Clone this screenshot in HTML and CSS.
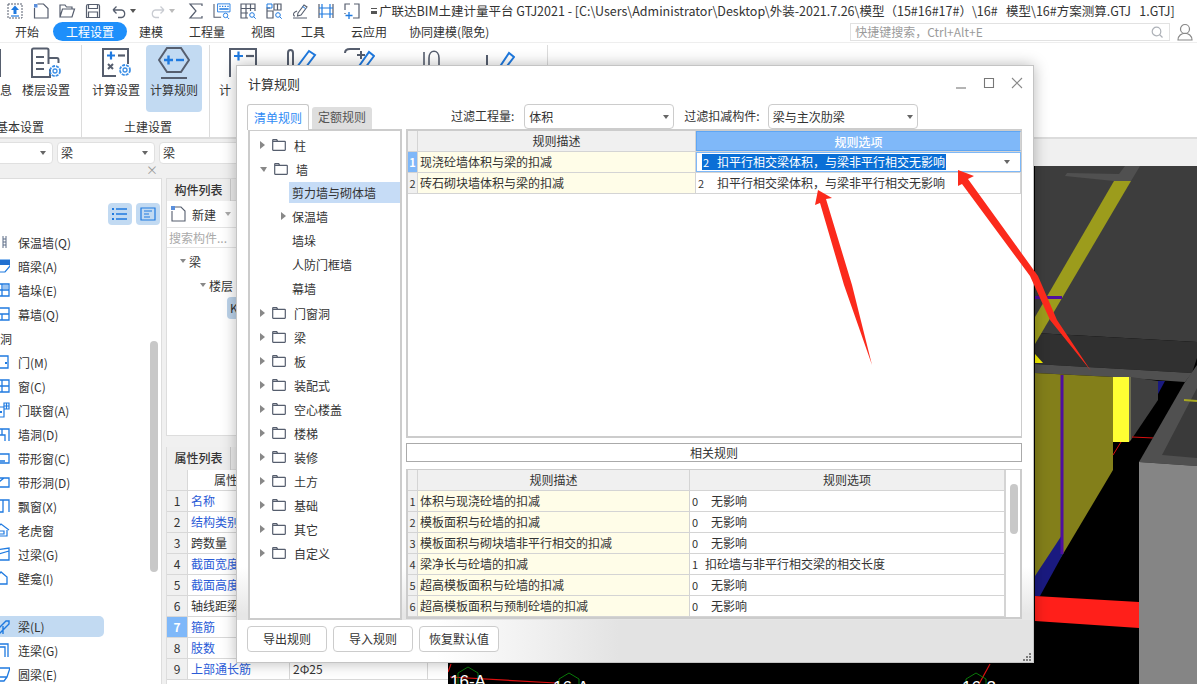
FILE: index.html
```html
<!DOCTYPE html>
<html lang="zh-CN">
<head>
    <meta charset="UTF-8">
    <title>广联达BIM土建计量平台 GTJ2021</title>
    <link rel="stylesheet" href="styles.css">
</head>
<body>

<svg class="defs" width="0" height="0">
    <symbol id="folder" viewBox="0 0 14 12"><path d="M.7 11.3V1.2c0-.3.2-.5.5-.5h3.5l1 1.6h7.1c.3 0 .5.2.5.5v8c0 .3-.2.5-.5.5H1.2c-.3 0-.5-.2-.5-.5zM.7 2.3h5" fill="none" stroke="#565e6e" stroke-width="1.2"/></symbol>
    <symbol id="n-wall" viewBox="0 0 16 16"><path d="M5 2v12M9 2v12M12 2v12M9 5h3M9 8h3M9 11h3" fill="none" stroke="#5b6b85" stroke-width="1"/></symbol>
    <symbol id="n-anl" viewBox="0 0 16 16"><path d="M0 7l5-5h11v6L11 14H0z" fill="none" stroke="#1f7ae0" stroke-width="1.2"/><path d="M0 7l5-5h11v5z" fill="#1f6fd0"/></symbol>
    <symbol id="n-duo" viewBox="0 0 16 16"><path d="M1 2h14v12H1zM1 8h14M8 2v12" fill="none" stroke="#1f7ae0" stroke-width="1.3"/><path d="M9 3h5v4H9z" fill="#9cc4f0"/></symbol>
    <symbol id="n-mu" viewBox="0 0 16 16"><path d="M1 2h14v12H1zM1 8h14M8 8v6" fill="none" stroke="#1f7ae0" stroke-width="1.3"/></symbol>
    <symbol id="n-door" viewBox="0 0 16 16"><path d="M2 14V2h12v12z" fill="none" stroke="#1f7ae0" stroke-width="1.3"/><path d="M11 8h2v2h-2z" fill="#1f7ae0"/></symbol>
    <symbol id="n-win" viewBox="0 0 16 16"><path d="M1 2h14v12H1zM8 2v12M1 8h14" fill="none" stroke="#1f7ae0" stroke-width="1.3"/></symbol>
    <symbol id="n-mlc" viewBox="0 0 16 16"><path d="M1 5h9v10H1zM10 1h5v6h-5zM12.500 1v6M10 4h5" fill="none" stroke="#1f7ae0" stroke-width="1.2"/><path d="M6 9h2v2H6z" fill="#1f7ae0"/></symbol>
    <symbol id="n-hole" viewBox="0 0 16 16"><path d="M1 15V3h14v12M5 15V9h6v6M8 3v6" fill="none" stroke="#1f7ae0" stroke-width="1.3"/></symbol>
    <symbol id="n-band" viewBox="0 0 16 16"><path d="M1 4h14v9H1zM1 11h10" fill="none" stroke="#1f7ae0" stroke-width="1.3"/></symbol>
    <symbol id="n-band2" viewBox="0 0 16 16"><path d="M1 4h14v9H1zM1 11l9-7" fill="none" stroke="#1f7ae0" stroke-width="1.3"/></symbol>
    <symbol id="n-piao" viewBox="0 0 16 16"><path d="M1 2h14v12M1 2v12h8V2" fill="none" stroke="#1f7ae0" stroke-width="1.3"/></symbol>
    <symbol id="n-house" viewBox="0 0 16 16"><path d="M0 8l7-6 8 6M2 8v6h11V8M5 9h5v3H5z" fill="none" stroke="#1f7ae0" stroke-width="1.2"/></symbol>
    <symbol id="n-guo" viewBox="0 0 16 16"><path d="M1 4l14-2v12H1zM1 9l14-4" fill="none" stroke="#1f7ae0" stroke-width="1.3"/></symbol>
    <symbol id="n-bi" viewBox="0 0 16 16"><path d="M2 14V7l5-5 6 5v7z" fill="none" stroke="#1f7ae0" stroke-width="1.3"/></symbol>
    <symbol id="n-liang" viewBox="0 0 16 16"><path d="M0 14L12 2h3v3L5 15M9 7v8" fill="none" stroke="#1f7ae0" stroke-width="1.4"/></symbol>
    <symbol id="n-lian" viewBox="0 0 16 16"><path d="M0 2h14v13M0 5h11v10" fill="none" stroke="#1f7ae0" stroke-width="1.3"/></symbol>
    <symbol id="n-yuan" viewBox="0 0 16 16"><path d="M5 2h11l-3 9H2zM2 11l-1 4h9l3-4" fill="none" stroke="#1f7ae0" stroke-width="1.3"/></symbol>
</svg>

<div class="app">

    <div class="titlebar">
        <span class="qa">
            <svg viewBox="0 0 16 16"><path d="M1 1h14v14H1z" fill="none" stroke="#565e6e" stroke-dasharray="2 1"/><path d="M8 2.500l4 4.500H9.500v4h-3V7H4z" fill="#1f7ae0"/><path d="M4 13h8" stroke="#1f7ae0" stroke-width="1.200"/></svg>
        </span>
        <span class="qa">
            <svg viewBox="0 0 16 16"><path d="M4.500 1h6L15 5.500V15H1.500V5" fill="none" stroke="#565e6e" stroke-width="1.200"/><path d="M1 1h3.500v3.500H1z" fill="#5a8fdc"/></svg>
        </span>
        <span class="qa">
            <svg viewBox="0 0 16 16"><path d="M1 14V2h5l1.500 2H13v2M1 14l2.500-8H15.500L13 14z" fill="none" stroke="#565e6e" stroke-width="1.200"/></svg>
        </span>
        <span class="qa">
            <svg viewBox="0 0 16 16"><path d="M1.500 3c0-1 .5-1.500 1.500-1.500h10c1 0 1.500.5 1.500 1.500v11.500h-13zM3.500 1.500v4h9v-4M3.500 14.500V9h9v5.500" fill="none" stroke="#565e6e" stroke-width="1.200"/></svg>
        </span>
        <span class="qa">
            <svg viewBox="0 0 16 16"><path d="M2 7h8.500a3.800 3.800 0 0 1 0 7.500H7M2 7l3.500-3.500M2 7l3.500 3.500" fill="none" stroke="#565e6e" stroke-width="1.300"/></svg>
        </span>
        <span class="qa-caret"></span>
        <span class="qa qa-redo">
            <svg viewBox="0 0 16 16"><path d="M14 7H5.500a3.800 3.800 0 0 0 0 7.500H9M14 7l-3.500-3.500M14 7l-3.500 3.500" fill="none" stroke="#c9ccd2" stroke-width="1.300"/></svg>
        </span>
        <span class="qa-caret qa-caret-off"></span>
        <span class="qa qa-sum">
            <svg viewBox="0 0 16 16"><path d="M14 3V1H2l6 7-6 7h12v-2" fill="none" stroke="#565e6e" stroke-width="1.200"/></svg>
        </span>
        <span class="qa">
            <svg viewBox="0 0 20 18"><path d="M1 1v15h8" fill="none" stroke="#565e6e" stroke-width="1.200"/><path d="M5 1h14v9H5z" fill="none" stroke="#1f7ae0"/><path d="M7 3h1.500v1.500H7zM10 3h1.500v1.500H10zM13 3h1.500v1.500H13zM16 3h1.500v1.500H16zM7 6h10.500v1.500H7z" fill="#1f7ae0"/><circle cx="14" cy="14" r="2.500" fill="none" stroke="#1f7ae0"/><path d="M16 16l2 2" stroke="#1f7ae0"/></svg>
        </span>
        <span class="qa">
            <svg viewBox="0 0 16 16"><path d="M8 15H1V1h14v7M1 5.500h14M1 10h7M6 1v14M10.500 1v7" fill="none" stroke="#565e6e" stroke-width="1.200"/><circle cx="12" cy="12" r="2.300" fill="none" stroke="#1f7ae0"/><path d="M13.700 13.700l2 2" stroke="#1f7ae0"/></svg>
        </span>
        <span class="qa">
            <svg viewBox="0 0 16 16"><path d="M8 1h7v6H8zM1 8h6v7H1zM1 8V5h3M11.500 1v6" fill="none" stroke="#565e6e" stroke-width="1.200"/><path d="M1 1h5v4H1z" fill="none" stroke="#1f7ae0"/><circle cx="12" cy="12" r="2.300" fill="none" stroke="#1f7ae0"/><path d="M13.700 13.700l2 2" stroke="#1f7ae0"/></svg>
        </span>
        <span class="qa">
            <svg viewBox="0 0 16 16"><path d="M1 15h14M3 13c-2 0-2-3 0-4l2-1M6 10l6-8 3 2-6 8-3.500 1z" fill="none" stroke="#565e6e" stroke-width="1.100"/><path d="M10.500 3.500l3 2" stroke="#1f7ae0"/></svg>
        </span>
        <span class="qa">
            <svg viewBox="0 0 16 16"><path d="M1 1v14M15 1v14" stroke="#565e6e" stroke-width="1.200"/><path d="M4 1v14M12 1v14M1 5h14M1 11h14" stroke="#1f7ae0" stroke-width="1.200"/></svg>
        </span>
        <span class="qa">
            <svg viewBox="0 0 16 16"><path d="M6 1h-5v6M10 1h5v14H9M1 10v1" fill="none" stroke="#565e6e" stroke-width="1.200"/><path d="M5 9v7M1.500 12.500h7" stroke="#1f7ae0" stroke-width="1.300"/></svg>
        </span>
        <span class="title-caret"></span>
        <span class="title-text">广联达BIM土建计量平台 GTJ2021 - [C:\Users\Administrator\Desktop\外装-2021.7.26\模型（15#16#17#）\16#&nbsp;&nbsp;&nbsp;模型\16#方案测算.GTJ&nbsp;&nbsp;&nbsp;1.GTJ]</span>
    </div>

    <div class="menubar">
        <span class="menu-item menu-kaishi">开始</span>
        <span class="menu-item menu-active">工程设置</span>
        <span class="menu-item menu-jianmo">建模</span>
        <span class="menu-item menu-lg">工程量</span>
        <span class="menu-item menu-lg">视图</span>
        <span class="menu-item menu-lg">工具</span>
        <span class="menu-item menu-lg">云应用</span>
        <span class="menu-item menu-xt">协同建模(限免)</span>
        <div class="quick-search">
            <span>快捷键搜索，Ctrl+Alt+E</span>
            <svg width="12" height="12" viewBox="0 0 12 12"><circle cx="5.500" cy="5.500" r="4.300" fill="none" stroke="#aeb2b8" stroke-width="1.200"/><path d="M8.500 8.500l3 3" stroke="#aeb2b8" stroke-width="1.200"/></svg>
        </div>
        <svg class="user-icon" width="16" height="18" viewBox="0 0 16 18"><circle cx="8" cy="6" r="4.500" fill="none" stroke="#888" stroke-width="1.200"/><path d="M1 17c0-9 14-9 14 0z" fill="none" stroke="#888" stroke-width="1.200"/></svg>
    </div>

    <div class="ribbon">
        <div class="ribbon-group ribbon-group-a">
            <div class="ribbon-tools">
                <div class="ribbon-item">
                    <svg viewBox="0 0 32 32"><path d="M4 3h24v26H4z" fill="none" stroke="#565e6e" stroke-width="2"/></svg>
                    <span>工程信息</span>
                </div>
                <div class="ribbon-item">
                    <svg viewBox="0 0 32 32"><path d="M20 22v8H2V3c0-1 .5-1.500 1.500-1.500H17c1 0 1.500.5 1.500 1.500v14M18.500 11H27c1 0 1.500 1 1.500 2v3" fill="none" stroke="#565e6e" stroke-width="2"/><path d="M6 10h8M6 16h8M6 22h8" stroke="#565e6e" stroke-width="2"/><circle cx="25" cy="24" r="5" fill="none" stroke="#3c8fe6" stroke-width="1.800" stroke-dasharray="3 1"/><circle cx="25" cy="24" r="2" fill="none" stroke="#3c8fe6" stroke-width="1.300"/></svg>
                    <span>楼层设置</span>
                </div>
            </div>
            <div class="ribbon-label">基本设置</div>
        </div>
        <div class="ribbon-group ribbon-group-b">
            <div class="ribbon-tools">
                <div class="ribbon-item">
                    <svg viewBox="0 0 32 32"><path d="M16 29H3V2h25v15" fill="none" stroke="#565e6e" stroke-width="2"/><path d="M7 8.500h8M11 4.500v8" stroke="#1f7ae0" stroke-width="2.200"/><path d="M18 8.500h7" stroke="#565e6e" stroke-width="2.200"/><path d="M8 17l5 5M13 17l-5 5" stroke="#565e6e" stroke-width="2"/><circle cx="25" cy="23" r="5" fill="none" stroke="#3c8fe6" stroke-width="1.800" stroke-dasharray="3 1"/><circle cx="25" cy="23" r="2" fill="none" stroke="#3c8fe6" stroke-width="1.300"/></svg>
                    <span>计算设置</span>
                </div>
                <div class="ribbon-item ribbon-item-active">
                    <svg viewBox="0 0 32 32"><path d="M9 1h14l8 12-8 12H9L1 13z" fill="none" stroke="#565e6e" stroke-width="2"/><path d="M6 13h9M10.500 8.500v9" stroke="#1f7ae0" stroke-width="2.400"/><path d="M18 13h8" stroke="#1f7ae0" stroke-width="2.400"/><path d="M3 31h26" stroke="#565e6e" stroke-width="2"/></svg>
                    <span>计算规则</span>
                </div>
            </div>
            <div class="ribbon-label">土建设置</div>
        </div>
        <div class="ribbon-group ribbon-group-c">
            <div class="ribbon-tools">
                <div class="ribbon-item">
                    <svg viewBox="0 0 32 32"><path d="M3 30V2h26v28" fill="none" stroke="#565e6e" stroke-width="2"/><path d="M7 9h9M11.500 4.500v9" stroke="#1f7ae0" stroke-width="2.200"/><path d="M19 9h8" stroke="#565e6e" stroke-width="2.200"/></svg>
                    <span class="ribbon-cut">计</span>
                </div>
                <div class="ribbon-item">
                    <svg viewBox="0 0 32 32"><path d="M3 30V6c0-4 5-4 5 0v24" fill="none" stroke="#565e6e" stroke-width="2"/><path d="M12 20L24 4l6 4-12 16-6 2z" fill="none" stroke="#1f7ae0" stroke-width="2"/></svg>
                </div>
                <div class="ribbon-item">
                    <svg viewBox="0 0 32 32"><path d="M2 6c0-4 3-4 5-4h10" fill="none" stroke="#565e6e" stroke-width="2"/><path d="M14 8h8M18 4v8" stroke="#565e6e" stroke-width="2"/><path d="M14 22L26 5l5 4-12 16-6 2z" fill="none" stroke="#1f7ae0" stroke-width="2"/></svg>
                </div>
                <div class="ribbon-item ribbon-item-gap">
                    <svg viewBox="0 0 32 32"><path d="M9 5v27M14 11c0-9 10-9 10 0v12c0 9-10 9-10 0z" fill="none" stroke="#565e6e" stroke-width="1.600"/></svg>
                </div>
                <div class="ribbon-item ribbon-item-gap2">
                    <svg viewBox="0 0 32 32"><path d="M4 8v20c0 2 1 3 3 3h3M10 18v9" fill="none" stroke="#565e6e" stroke-width="2"/><path d="M14 24L26 6l5 4-13 17-5 2z" fill="none" stroke="#1f7ae0" stroke-width="2"/></svg>
                </div>
            </div>
        </div>
    </div>

    <div class="selectbar">
        <div class="combo combo-first"><span></span><i class="caret"></i></div>
        <div class="combo"><span>梁</span><i class="caret"></i></div>
        <div class="combo combo-wide"><span>梁</span><i class="caret"></i></div>
    </div>

    <div class="workspace">

        <div class="nav-panel">
            <div class="nav-head"><span class="nav-close">×</span></div>
            <div class="nav-body">
                <div class="nav-tools">
                    <span class="nav-btn">
                        <svg width="16" height="14" viewBox="0 0 16 14"><path d="M4 2h11M4 7h11M4 12h11" stroke="#1f7ae0" stroke-width="1.300"/><path d="M0 1h2v2H0zM0 6h2v2H0zM0 11h2v2H0z" fill="#1f7ae0"/></svg>
                    </span>
                    <span class="nav-btn">
                        <svg width="16" height="14" viewBox="0 0 16 14"><path d="M1 1h14v12H1zM4 4h8M4 7h5M4 10h6" fill="none" stroke="#1f7ae0" stroke-width="1.200"/></svg>
                    </span>
                </div>
                <div class="nav-list">
                    <div class="nav-row"><svg><use href="#n-wall"/></svg>保温墙(Q)</div>
                    <div class="nav-row"><svg><use href="#n-anl"/></svg>暗梁(A)</div>
                    <div class="nav-row"><svg><use href="#n-duo"/></svg>墙垛(E)</div>
                    <div class="nav-row"><svg><use href="#n-mu"/></svg>幕墙(Q)</div>
                    <div class="nav-row nav-heading">洞</div>
                    <div class="nav-row"><svg><use href="#n-door"/></svg>门(M)</div>
                    <div class="nav-row"><svg><use href="#n-win"/></svg>窗(C)</div>
                    <div class="nav-row"><svg><use href="#n-mlc"/></svg>门联窗(A)</div>
                    <div class="nav-row"><svg><use href="#n-hole"/></svg>墙洞(D)</div>
                    <div class="nav-row"><svg><use href="#n-band"/></svg>带形窗(C)</div>
                    <div class="nav-row"><svg><use href="#n-band2"/></svg>带形洞(D)</div>
                    <div class="nav-row"><svg><use href="#n-piao"/></svg>飘窗(X)</div>
                    <div class="nav-row"><svg><use href="#n-house"/></svg>老虎窗</div>
                    <div class="nav-row"><svg><use href="#n-guo"/></svg>过梁(G)</div>
                    <div class="nav-row"><svg><use href="#n-bi"/></svg>壁龛(I)</div>
                    <div class="nav-row"></div>
                    <div class="nav-row nav-row-active"><svg><use href="#n-liang"/></svg>梁(L)</div>
                    <div class="nav-row"><svg><use href="#n-lian"/></svg>连梁(G)</div>
                    <div class="nav-row"><svg><use href="#n-yuan"/></svg>圆梁(E)</div>
                </div>
                <div class="nav-scroll"></div>
            </div>
        </div>

        <div class="mid-panel">
            <div class="comp-panel">
                <div class="panel-tabs"><span class="panel-tab">构件列表</span></div>
                <div class="comp-new">
                    <svg width="15" height="16" viewBox="0 0 15 16"><path d="M4 1h6l4 4v10H1V5" fill="none" stroke="#565e6e" stroke-width="1.100"/><path d="M0 0h4v4H0z" fill="#5a8fdc"/></svg>
                    <span>新建</span>
                    <i class="caret"></i>
                </div>
                <div class="comp-search">搜索构件...</div>
                <div class="comp-tree">
                    <div class="comp-node comp-node-1"><i class="caret"></i>梁</div>
                    <div class="comp-node comp-node-2"><i class="caret"></i>楼层</div>
                    <div class="comp-chip">K</div>
                </div>
            </div>
            <div class="prop-panel">
                <div class="panel-tabs"><span class="panel-tab">属性列表</span></div>
                <div class="prop-row prop-head"><span></span><span class="prop-name-head">属性名称</span><span></span></div>
                <div class="prop-row"><span>1</span><span class="prop-link">名称</span><span></span></div>
                <div class="prop-row"><span>2</span><span class="prop-link">结构类别</span><span></span></div>
                <div class="prop-row"><span>3</span><span>跨数量</span><span></span></div>
                <div class="prop-row"><span>4</span><span class="prop-link">截面宽度</span><span></span></div>
                <div class="prop-row"><span>5</span><span class="prop-link">截面高度</span><span></span></div>
                <div class="prop-row"><span>6</span><span>轴线距梁左</span><span></span></div>
                <div class="prop-row prop-row-active"><span>7</span><span class="prop-link">箍筋</span><span></span></div>
                <div class="prop-row"><span>8</span><span class="prop-link">肢数</span><span></span></div>
                <div class="prop-row"><span>9</span><span class="prop-link">上部通长筋</span><span>2Φ25</span></div>
            </div>
        </div>

        <svg class="viewport" viewBox="448 166 749 518">
            <rect x="448" y="166" width="749" height="518" fill="#000"/>
            <!-- floor slab -->
            <polygon points="1035,166 1197,166 1197,342 1035,333" fill="#3d3d3d"/>
            <polygon points="1035,333 1197,342 1197,358 1192,373 1035,364" fill="#303030"/>
            <polygon points="1035,364 1192,373 1185,382 1113,377 1035,373" fill="#505050"/>
            <polygon points="1125,166 1140,166 1131,181 1114,181 1065,176 1067,173 1119,174" fill="#505050"/>
            <polygon points="1114,181 1131,181 1035,344 1035,317" fill="#9c9c1c"/>
            <polygon points="1035,296 1062,296 1062,299 1035,299" fill="#4f0f9e"/>
            <polygon points="1035,354 1043,363 1035,363" fill="#f5f000"/>
            <!-- wall below slab -->
            <polygon points="1035,373 1113,377 1113,470 1063,554 1035,596" fill="#837f1a"/>
            <polygon points="1062,535 1063,554 1040,596 1035,596 1035,576" fill="#1a1a80"/>
            <path d="M1062 375V554" stroke="#4f0f9e" stroke-width="3"/>
            <rect x="1113" y="377" width="16" height="65" fill="#ffff33"/>
            <polygon points="1129,377 1131,377 1131,440 1129,442" fill="#6e6e50"/>
            <polygon points="1131,377 1158,381 1158,400 1131,440" fill="#404040"/>
            <polygon points="1158,381 1165,381 1158,394" fill="#1a1a80"/>
            <path d="M1132 437L1154 438M1121 442L1113 455" stroke="#d80f0f" fill="none"/>
            <polygon points="1035,596 1139,602 1139,628 1035,621" fill="#ff1f1a"/>
            <!-- grey block -->
            <polygon points="1139,462 1185,382 1197,365 1197,466" fill="#505050"/>
            <polygon points="1162,455 1197,388 1197,458" fill="#3a3a3a"/>
            <polygon points="1139,462 1197,466 1197,684 1139,684" fill="#858585"/>
            <path d="M1184 400L1197 401" stroke="#a8a820" stroke-width="2"/>
            <!-- axis labels -->
            <path d="M450 677L556 683M990 664L979 684M451 664L448 672" stroke="#e01010" stroke-width="1.200" fill="none"/>
            <polygon points="468,667 478,673 478,690 458,690 458,673" fill="none" stroke="#0a7a0a"/>
            <polygon points="569,673 579,679 579,696 559,696 559,679" fill="none" stroke="#0a7a0a"/>
            <polygon points="976,673 986,679 986,696 966,696 966,679" fill="none" stroke="#0a7a0a"/>
            <text class="axis-text" x="450" y="687">16-A</text>
            <text class="axis-text" x="553" y="693">16-A</text>
            <text class="axis-text" x="962" y="693">16-2</text>
        </svg>
    </div>

    <div class="dialog">
        <div class="dialog-head">
            <span class="dialog-title">计算规则</span>
            <div class="win-btns">
                <svg width="12" height="12" viewBox="0 0 12 12"><path d="M1 11h10" stroke="#777" stroke-width="1.100"/></svg>
                <svg width="12" height="12" viewBox="0 0 12 12"><path d="M1.500 1.500h9v9h-9z" fill="none" stroke="#777" stroke-width="1.100"/></svg>
                <svg width="12" height="12" viewBox="0 0 12 12"><path d="M1 1l10 10M11 1L1 11" stroke="#888" stroke-width="1.100"/></svg>
            </div>
        </div>

        <div class="dialog-bar">
            <span class="rule-tab rule-tab-active">清单规则</span>
            <span class="rule-tab">定额规则</span>
            <span class="filter-label filter-label-a">过滤工程量:</span>
            <div class="filter-select"><span>体积</span><i class="caret"></i></div>
            <span class="filter-label filter-label-b">过滤扣减构件:</span>
            <div class="filter-select"><span>梁与主次肋梁</span><i class="caret"></i></div>
        </div>

        <div class="dialog-main">
            <div class="rule-tree">
                <div class="tree-row"><i class="tri"></i><svg class="tree-folder"><use href="#folder"/></svg><span>柱</span></div>
                <div class="tree-row"><i class="tri tri-open"></i><svg class="tree-folder"><use href="#folder"/></svg><span>墙</span></div>
                <div class="tree-child tree-child-active">剪力墙与砌体墙</div>
                <div class="tree-child"><i class="tri"></i>保温墙</div>
                <div class="tree-child">墙垛</div>
                <div class="tree-child">人防门框墙</div>
                <div class="tree-child">幕墙</div>
                <div class="tree-row"><i class="tri"></i><svg class="tree-folder"><use href="#folder"/></svg><span>门窗洞</span></div>
                <div class="tree-row"><i class="tri"></i><svg class="tree-folder"><use href="#folder"/></svg><span>梁</span></div>
                <div class="tree-row"><i class="tri"></i><svg class="tree-folder"><use href="#folder"/></svg><span>板</span></div>
                <div class="tree-row"><i class="tri"></i><svg class="tree-folder"><use href="#folder"/></svg><span>装配式</span></div>
                <div class="tree-row"><i class="tri"></i><svg class="tree-folder"><use href="#folder"/></svg><span>空心楼盖</span></div>
                <div class="tree-row"><i class="tri"></i><svg class="tree-folder"><use href="#folder"/></svg><span>楼梯</span></div>
                <div class="tree-row"><i class="tri"></i><svg class="tree-folder"><use href="#folder"/></svg><span>装修</span></div>
                <div class="tree-row"><i class="tri"></i><svg class="tree-folder"><use href="#folder"/></svg><span>土方</span></div>
                <div class="tree-row"><i class="tri"></i><svg class="tree-folder"><use href="#folder"/></svg><span>基础</span></div>
                <div class="tree-row"><i class="tri"></i><svg class="tree-folder"><use href="#folder"/></svg><span>其它</span></div>
                <div class="tree-row"><i class="tri"></i><svg class="tree-folder"><use href="#folder"/></svg><span>自定义</span></div>
            </div>

            <div class="rule-right">
                <div class="rule-grid">
                    <div class="grid-row grid-head">
                        <span class="cell-num"></span>
                        <span class="cell-title">规则描述</span>
                        <span class="cell-title cell-title-active">规则选项</span>
                    </div>
                    <div class="grid-row">
                        <span class="cell-num cell-num-active">1</span>
                        <span class="cell-desc">现浇砼墙体积与梁的扣减</span>
                        <span class="cell-opt cell-opt-edit"><span class="opt-selected"><b class="opt-no opt-no-sel">2</b>扣平行相交梁体积，与梁非平行相交无影响</span><i class="caret"></i></span>
                    </div>
                    <div class="grid-row">
                        <span class="cell-num">2</span>
                        <span class="cell-desc">砖石砌块墙体积与梁的扣减</span>
                        <span class="cell-opt"><b class="opt-no">2</b>扣平行相交梁体积，与梁非平行相交无影响</span>
                    </div>
                </div>

                <div class="related-title">相关规则</div>

                <div class="rule-grid rule-grid-low">
                    <div class="grid-rows">
                        <div class="grid-row grid-head">
                            <span class="cell-num"></span>
                            <span class="cell-title">规则描述</span>
                            <span class="cell-title">规则选项</span>
                        </div>
                        <div class="grid-row"><span class="cell-num">1</span><span class="cell-desc">体积与现浇砼墙的扣减</span><span class="cell-opt"><b class="opt-no">0</b>无影响</span></div>
                        <div class="grid-row"><span class="cell-num">2</span><span class="cell-desc">模板面积与砼墙的扣减</span><span class="cell-opt"><b class="opt-no">0</b>无影响</span></div>
                        <div class="grid-row"><span class="cell-num">3</span><span class="cell-desc">模板面积与砌块墙非平行相交的扣减</span><span class="cell-opt"><b class="opt-no">0</b>无影响</span></div>
                        <div class="grid-row"><span class="cell-num">4</span><span class="cell-desc">梁净长与砼墙的扣减</span><span class="cell-opt"><b class="opt-no opt-no-tight">1</b>扣砼墙与非平行相交梁的相交长度</span></div>
                        <div class="grid-row"><span class="cell-num">5</span><span class="cell-desc">超高模板面积与砼墙的扣减</span><span class="cell-opt"><b class="opt-no">0</b>无影响</span></div>
                        <div class="grid-row"><span class="cell-num">6</span><span class="cell-desc">超高模板面积与预制砼墙的扣减</span><span class="cell-opt"><b class="opt-no">0</b>无影响</span></div>
                        <div class="grid-row"><span class="cell-num"></span><span class="cell-desc"></span><span class="cell-opt"></span></div>
                    </div>
                    <div class="grid-scroll"><span class="grid-thumb"></span></div>
                </div>
            </div>
        </div>

        <div class="dialog-foot">
            <span class="foot-btn">导出规则</span>
            <span class="foot-btn">导入规则</span>
            <span class="foot-btn">恢复默认值</span>
        </div>
        <svg class="grip" width="8" height="8" viewBox="0 0 8 8"><path d="M6 0h2v2H6zM3 3h2v2H3zM6 3h2v2H6zM0 6h2v2H0zM3 6h2v2H3zM6 6h2v2H6z" fill="#7c7c7c"/></svg>
    </div>

    <!-- red arrows drawn on the screenshot -->
    <svg class="arrows" viewBox="0 0 1197 684">
        <polygon points="818,190 832,198 826,199 852,285 872,365 844,285 820,203 815,205" fill="#fb2a1c"/>
        <polygon points="958,170 974,176 968,179 1038,276 1057,320 1091,371 1050,320 1030,276 962,184 958,186" fill="#fb2a1c"/>
    </svg>
</div>

</body>
</html>
```

FILE: styles.css
```css
* {
    box-sizing: border-box;
}

body {
    margin: 0;
    font-family: "Noto Sans CJK SC", "Noto Sans", sans-serif;
    font-size: 12px;
    color: #333;
    background: #f0f0f0;
}

.defs {
    position: absolute;
}

.app {
    position: relative;
    width: 1197px;
    height: 684px;
    overflow: hidden;
    display: flex;
    flex-direction: column;
}

.caret {
    display: inline-block;
    width: 0;
    height: 0;
    border-left: 3px solid transparent;
    border-right: 3px solid transparent;
    border-top: 4px solid #666;
}

/* title bar */
.titlebar {
    height: 21px;
    flex: none;
    display: flex;
    align-items: center;
    padding-left: 2px;
    background: #fff;
    white-space: nowrap;
}

.qa {
    width: 26px;
    height: 16px;
    flex: none;
    display: flex;
    justify-content: center;
}

.qa svg {
    height: 16px;
    width: 20px;
}

.qa-redo {
    margin-left: 6px;
}

.qa-sum {
    margin-left: 5px;
}

.qa-caret {
    width: 0;
    height: 0;
    margin: 0 3px 0 -2px;
    border-left: 3px solid transparent;
    border-right: 3px solid transparent;
    border-top: 4px solid #555;
}

.qa-caret-off {
    border-top-color: #bbb;
}

.title-caret {
    width: 6px;
    height: 6px;
    margin-left: 6px;
    border-top: 1px solid #555;
    border-bottom: 3px solid #555;
}

.title-text {
    margin-left: 2px;
    font-size: 12.500px;
    color: #333;
}

/* menu bar */
.menubar {
    height: 21px;
    flex: none;
    display: flex;
    align-items: center;
    background: #fff;
}

.menu-item {
    flex: none;
}

.menu-kaishi {
    margin-left: 15px;
}

.menu-active {
    width: 74px;
    height: 19px;
    line-height: 19px;
    margin-left: 14px;
    text-align: center;
    color: #fff;
    background: #1e8ffb;
    border-radius: 10px;
}

.menu-jianmo {
    margin-left: 12px;
}

.menu-lg {
    margin-left: 26px;
}

.menu-xt {
    margin-left: 22px;
}

.quick-search {
    width: 320px;
    height: 18px;
    margin-left: 361px;
    padding: 0 6px 0 4px;
    display: flex;
    align-items: center;
    justify-content: space-between;
    color: #9b9b9b;
    background: #fff;
    border: 1px solid #e2e2e2;
}

.user-icon {
    margin-left: 7px;
    flex: none;
}

/* ribbon */
.ribbon {
    height: 97px;
    flex: none;
    display: flex;
    margin-left: -41px;
    padding-top: 2px;
    background: #fff;
    border-top: 1px solid #eee;
    border-bottom: 2px solid #dcdcdc;
}

.ribbon-group {
    height: 92px;
    display: flex;
    flex-direction: column;
    border-right: 1px solid #dcdcdc;
}

.ribbon-group-a {
    width: 123px;
}

.ribbon-group-b {
    width: 128px;
    padding-left: 5px;
}

.ribbon-group-c {
    width: 338px;
    padding-left: 4px;
}

.ribbon-tools {
    display: flex;
    height: 74px;
}

.ribbon-item {
    width: 58px;
    height: 67px;
    flex: none;
    display: flex;
    flex-direction: column;
    align-items: center;
    padding-top: 2px;
    border-radius: 4px;
}

.ribbon-item svg {
    width: 32px;
    height: 32px;
    flex: none;
}

.ribbon-item span {
    margin-top: 2px;
    white-space: nowrap;
}

.ribbon-item .ribbon-cut {
    width: 48px;
}

.ribbon-item-active {
    width: 56px;
    margin-left: 1px;
    background: #c2daf2;
}

.ribbon-item-gap {
    margin-left: 14px;
}

.ribbon-item-gap2 {
    margin-left: 10px;
}

.ribbon-label {
    text-align: center;
    line-height: 16px;
}

/* selects under the ribbon */
.selectbar {
    height: 27px;
    flex: none;
    display: flex;
    align-items: center;
    gap: 4px;
    padding-top: 0;
    background: #f0f0f0;
}

.combo {
    width: 98px;
    height: 22px;
    flex: none;
    display: flex;
    align-items: center;
    justify-content: space-between;
    padding: 0 6px 0 3px;
    background: #fff;
    border: 1px solid #e0e0e0;
    border-radius: 4px;
}

.combo-first {
    width: 60px;
    margin-left: -7px;
}

.combo-wide {
    width: 120px;
}

/* main area */
.workspace {
    flex: 1;
    min-height: 0;
    display: flex;
}

.nav-panel {
    width: 162px;
    flex: none;
    display: flex;
    flex-direction: column;
}

.nav-head {
    height: 12px;
    flex: none;
    position: relative;
    background: #f0f0f0;
}

.nav-close {
    position: absolute;
    right: 4px;
    top: -3px;
    color: #999;
    font-size: 12px;
    line-height: 14px;
}

.nav-body {
    flex: 1;
    position: relative;
    background: #fff;
    border-top: 1px solid #ddd;
    border-right: 1px solid #ddd;
    overflow: hidden;
}

.nav-tools {
    height: 51px;
    display: flex;
    justify-content: flex-end;
    gap: 4px;
    padding: 24px 1px 0 0;
}

.nav-btn {
    width: 24px;
    height: 22px;
    display: flex;
    align-items: center;
    justify-content: center;
    background: #c2daf2;
    border-radius: 4px;
}

.nav-row {
    width: 104px;
    height: 24px;
    display: flex;
    align-items: center;
    padding-left: 0;
    white-space: nowrap;
    border-radius: 0 5px 5px 0;
}

.nav-row svg {
    width: 16px;
    height: 16px;
    flex: none;
    margin: 0 8px 0 -6px;
}

.nav-row-active {
    height: 21px;
    margin: 2px 0 1px;
    background: #c2daf2;
}

.nav-heading {
    padding-left: 0;
}

.nav-scroll {
    position: absolute;
    left: 150px;
    top: 162px;
    width: 8px;
    height: 231px;
    background: #c8c8c8;
    border-radius: 4px;
}

.mid-panel {
    width: 286px;
    flex: none;
    margin-left: 0;
    padding-left: 4px;
    display: flex;
    flex-direction: column;
}

.comp-panel {
    height: 258px;
    margin-top: 12px;
    flex: none;
    background: #fff;
    border: 1px solid #ddd;
    overflow: hidden;
}

.panel-tabs {
    height: 22px;
    background: #ececec;
    border-bottom: 1px solid #ddd;
}

.panel-tab {
    display: inline-block;
    width: 64px;
    height: 22px;
    line-height: 21px;
    text-align: center;
    font-weight: 500;
    background: #efefef;
    border-right: 1px solid #ccc;
}

.comp-new {
    height: 27px;
    display: flex;
    align-items: center;
    padding-left: 4px;
    border-bottom: 1px solid #e4e4e4;
}

.comp-new span {
    margin: 0 9px 0 6px;
}

.comp-new .caret {
    border-top-color: #aaa;
}

.comp-search {
    height: 20px;
    line-height: 20px;
    padding-left: 2px;
    color: #aaa;
    border-bottom: 1px solid #e4e4e4;
}

.comp-tree {
    padding-top: 1px;
}

.comp-node {
    height: 24px;
    display: flex;
    align-items: center;
    gap: 3px;
}

.comp-node .caret {
    border-top-color: #888;
}

.comp-node-1 {
    padding-left: 13px;
}

.comp-node-2 {
    padding-left: 33px;
}

.comp-chip {
    width: 40px;
    height: 22px;
    margin-left: 60px;
    padding-left: 3px;
    line-height: 22px;
    background: #bcd3ea;
    border-radius: 4px;
}

.prop-panel {
    margin-top: 11px;
    flex: 1;
    background: #fff;
    overflow: hidden;
    border-left: 1px solid #ddd;
}

.prop-panel .panel-tabs {
    height: 23px;
}

.prop-panel .panel-tab {
    height: 23px;
    line-height: 22px;
}

.prop-row {
    height: 21px;
    display: grid;
    grid-template-columns: 21px 102px 138px 1fr;
    line-height: 20px;
    border-bottom: 1px solid #d8d8d8;
}

.prop-row span {
    padding-left: 3px;
    border-right: 1px solid #d8d8d8;
    white-space: nowrap;
    overflow: hidden;
}

.prop-row span:first-child {
    padding: 0;
    text-align: center;
    background: #f0f0f0;
}

.prop-name-head {
    padding-left: 26px !important;
}

.prop-link {
    color: #2a5bd7;
}

.prop-row-active span:first-child {
    color: #fff;
    font-weight: bold;
    background: #7fb8f9;
}

.viewport {
    flex: 1;
    min-width: 0;
    display: block;
    height: 518px;
}

.axis-text {
    font-family: "Liberation Sans", sans-serif;
    font-size: 17px;
    fill: #fff;
}

/* dialog */
.dialog {
    position: absolute;
    left: 236px;
    top: 65px;
    width: 798px;
    height: 598px;
    display: flex;
    flex-direction: column;
    padding: 0 11px;
    background: linear-gradient(#fff 84%, #e6e6e6 92%);
    border: 1px solid #c4c4c4;
    box-shadow: 0 0 14px rgba(0, 0, 0, 0.28);
}

.dialog-head {
    height: 37px;
    flex: none;
    display: flex;
    align-items: center;
    justify-content: space-between;
    padding-bottom: 3px;
}

.dialog-title {
    font-size: 13px;
}

.win-btns {
    display: flex;
    gap: 16px;
    margin-right: -1px;
}

.dialog-bar {
    height: 26px;
    flex: none;
    display: flex;
    align-items: flex-end;
}

.rule-tab {
    width: 60px;
    height: 22px;
    margin-left: 3px;
    line-height: 20px;
    text-align: center;
    color: #555;
    background: #dedede;
    border-radius: 3px 3px 0 0;
}

.rule-tab-active {
    width: 62px;
    height: 26px;
    margin: 0 0 -1px -1px;
    line-height: 25px;
    position: relative;
    color: #2f8bf5;
    background: #fff;
    border: 1px solid #c8c8c8;
    border-bottom: none;
}

.filter-label {
    height: 24px;
    line-height: 22px;
    white-space: nowrap;
}

.filter-label-a {
    margin-left: 79px;
}

.filter-label-b {
    margin-left: 10px;
}

.filter-select {
    width: 150px;
    height: 25px;
    margin-left: 10px;
    display: flex;
    align-items: center;
    justify-content: space-between;
    padding: 0 4px 0 4px;
    background: #fff;
    border: 1px solid #ccc;
    border-radius: 4px;
}

.filter-label-b + .filter-select {
    margin-left: 8px;
}

.dialog-main {
    height: 491px;
    flex: none;
    display: flex;
    gap: 4px;
}

.rule-tree {
    width: 154px;
    flex: none;
    padding-top: 2px;
    background: #fff;
    border: 2px solid #ccc;
}

.tree-row {
    height: 24px;
    display: flex;
    align-items: center;
    padding-left: 10px;
}

.tree-folder {
    width: 14px;
    height: 12px;
    margin-left: 6px;
}

.tree-row span {
    margin-left: 8px;
}

.tri {
    display: inline-block;
    width: 0;
    height: 0;
    border-top: 4px solid transparent;
    border-bottom: 4px solid transparent;
    border-left: 5px solid #888;
}

.tree-row .tri {
    margin-right: 1px;
}

.tri-open {
    border-left: 4px solid transparent;
    border-right: 3px solid transparent;
    border-top: 5px solid #888;
    border-bottom: none;
}

.tree-child {
    height: 24px;
    margin-left: 39px;
    padding-left: 3px;
    line-height: 23px;
    position: relative;
}

.tree-child-active {
    height: 21px;
    margin-top: 1px;
    margin-bottom: 2px;
    line-height: 21px;
    background: #c6dcf6;
}

.tree-child .tri {
    position: absolute;
    left: -8px;
    top: 7px;
}

.rule-right {
    flex: 1;
    min-width: 0;
    display: flex;
    flex-direction: column;
}

.rule-grid {
    height: 309px;
    flex: none;
    background: #fff;
    border: 2px solid #ccc;
    border-right-width: 1px;
}

.rule-grid-low {
    height: 150px;
    margin-top: 7px;
    display: flex;
    border-right-width: 2px;
    border-top-width: 1px;
    overflow: hidden;
}

.grid-rows {
    flex: 1;
    min-width: 0;
}

.rule-grid-low .grid-row {
    grid-template-columns: 10px 272px 1fr;
}

.grid-row {
    height: 21px;
    display: grid;
    grid-template-columns: 10px 278px 1fr;
    line-height: 20px;
    border-bottom: 1px solid #d4d4d4;
}

.grid-row > span {
    border-right: 1px solid #d4d4d4;
    white-space: nowrap;
    overflow: hidden;
}

.cell-num {
    font-size: 11px;
    text-align: center;
    background: #f0f0f0;
}

.cell-num-active {
    font-weight: bold;
    color: #fff;
    background: #7fb8f9;
}

.cell-title {
    text-align: center;
    background: #f0f0f0;
}

.cell-title-active {
    font-weight: 500;
    color: #fff;
    background: #7fb8f9;
    border: 1px solid #5ea6f5;
}

.cell-desc {
    padding-left: 2px;
    background: #fffde8;
}

.cell-opt {
    padding-left: 2px;
    display: flex;
    align-items: center;
}

.cell-opt-edit {
    padding: 0 10px 0 5px;
    justify-content: space-between;
    border: 1px solid #7db8f8 !important;
}

.opt-selected {
    height: 16px;
    line-height: 16px;
    padding: 0 1px;
    display: flex;
    color: #fff;
    background: #0a6fd6;
}

.opt-no {
    width: 19px;
    flex: none;
    font-weight: normal;
    font-size: 11px;
}

.opt-no-tight {
    width: 13px;
}

.opt-no-sel {
    width: 14px;
}

.related-title {
    height: 19px;
    flex: none;
    margin-top: 5px;
    line-height: 17px;
    text-align: center;
    background: #fff;
    border: 1px solid #aaa;
}

.grid-scroll {
    width: 15px;
    flex: none;
    padding: 14px 0 0 4px;
    background: #fff;
    border-left: 1px solid #d4d4d4;
}

.grid-thumb {
    display: block;
    width: 8px;
    height: 50px;
    background: #c8c8c8;
    border-radius: 4px;
}

.dialog-foot {
    flex: 1;
    display: flex;
    gap: 6px;
    padding: 6px 0 0 0;
    margin: 0 -11px;
    padding-left: 10px;
    background: linear-gradient(90deg, #fff 25%, #e3e3e3 48%);
}

.foot-btn {
    width: 80px;
    height: 26px;
    line-height: 24px;
    text-align: center;
    background: #fff;
    border: 1px solid #ccc;
    border-radius: 4px;
}

.grip {
    position: absolute;
    right: 2px;
    bottom: 1px;
}

.arrows {
    position: absolute;
    left: 0;
    top: 0;
    width: 1197px;
    height: 684px;
    pointer-events: none;
}
```
